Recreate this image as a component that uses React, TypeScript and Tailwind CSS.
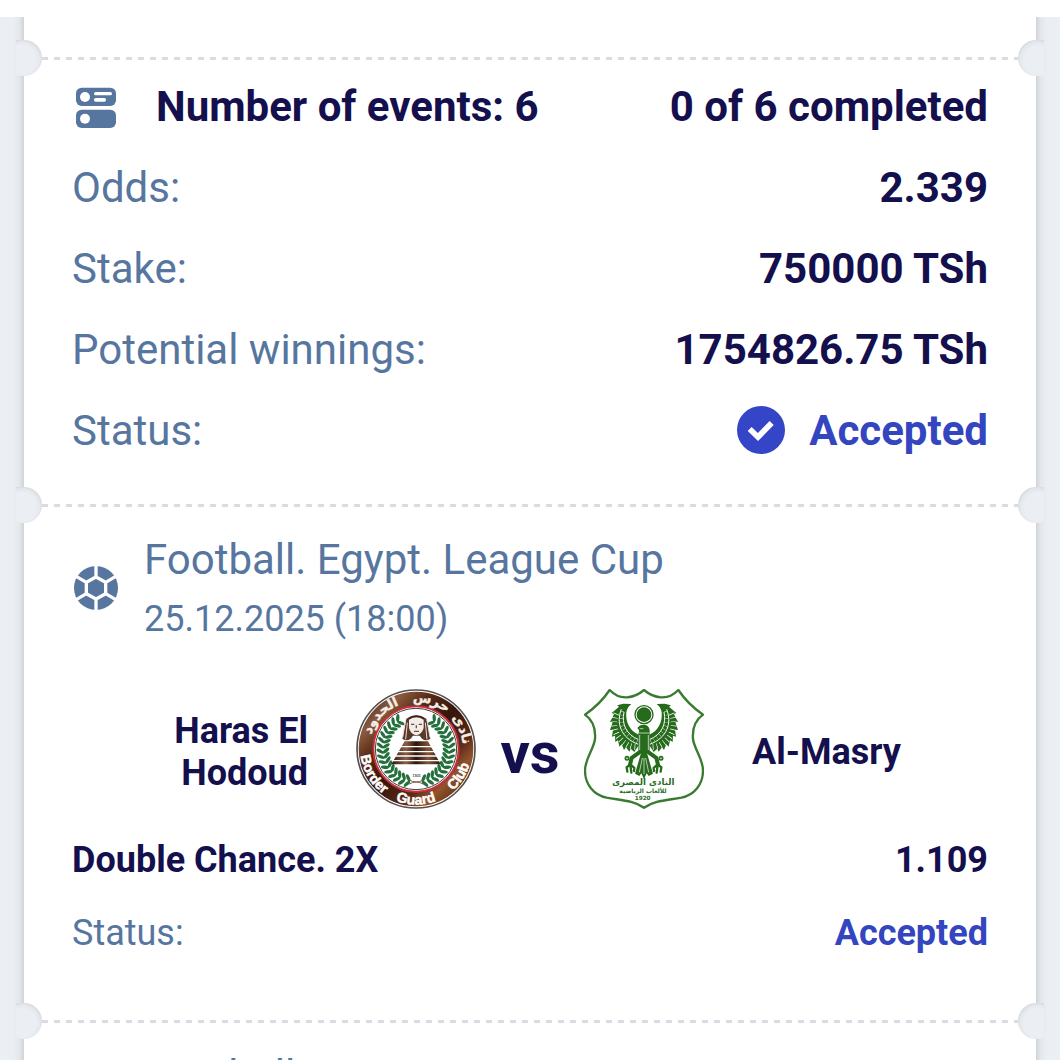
import React from 'react';

interface EventHeaderProps {
  league: string;
  date: string;
}

interface SummaryRowProps {
  label: string;
  children: React.ReactNode;
}

const EventsIcon = () => (
  <svg viewBox="36 25 144 144" className="w-12 h-12 shrink-0" aria-hidden="true">
    <rect x="48" y="39" width="120" height="55" rx="17" fill="#57769f" />
    <rect x="48" y="105" width="120" height="55" rx="17" fill="#57769f" />
    <circle cx="75" cy="67" r="15" fill="#fff" />
    <circle cx="75" cy="132" r="15" fill="#fff" />
    <rect x="102" y="52" width="54" height="10" rx="5" fill="#fff" />
    <rect x="102" y="70" width="36" height="11" rx="5" fill="#fff" />
  </svg>
);

const BallIcon = () => (
  <svg viewBox="66 72 144 144" className="w-12 h-12 shrink-0" aria-hidden="true">
    <circle cx="138" cy="144" r="66" fill="#57769f" />
    <path
      d="M138 111L167 127V161L138 177L109 161V127ZM138 111V74M167 127L201 107M167 161L201 181M138 177V214M109 161L75 181M109 127L75 107"
      fill="none"
      stroke="#fff"
      strokeWidth="10"
    />
  </svg>
);

const CheckIcon = () => (
  <svg viewBox="48 45 144 144" className="w-12 h-12 shrink-0" aria-hidden="true">
    <circle cx="120" cy="117" r="72" fill="#3445c8" />
    <path d="M86 114L111 138L152 96" fill="none" stroke="#fff" strokeWidth="17" />
  </svg>
);

const leafAngles = [-58, -49, -40, -31, -22, -13, -4, 5, 14, 23, 32, 41, 50, 59, 68, 77];

const HarasLogo = () => (
  <svg viewBox="48 57 360 360" className="w-[120px] h-[120px] shrink-0" role="img" aria-label="Haras El Hodoud">
    <defs>
      <linearGradient id="bronze" x1="0" y1="0" x2="1" y2="1">
        <stop offset="0" stopColor="#2e1308" />
        <stop offset=".2" stopColor="#8a5a3e" />
        <stop offset=".32" stopColor="#5a2b17" />
        <stop offset=".5" stopColor="#35150b" />
        <stop offset=".68" stopColor="#5a2b17" />
        <stop offset=".78" stopColor="#94532b" />
        <stop offset="1" stopColor="#240c05" />
      </linearGradient>
      <linearGradient id="stone" x1="0" x2="1">
        <stop offset="0" stopColor="#2c150c" />
        <stop offset=".3" stopColor="#8c6045" />
        <stop offset=".5" stopColor="#2c150c" />
        <stop offset=".75" stopColor="#80543a" />
        <stop offset="1" stopColor="#2c150c" />
      </linearGradient>
      <path id="ringTop" d="M87 237A141 141 0 0 1 369 237" />
      <path id="ringBottom" d="M61 237A167 167 0 0 0 395 237" />
    </defs>
    <circle cx="228" cy="237" r="177" fill="#fff" stroke="#55504e" strokeWidth="5" />
    <circle cx="228" cy="237" r="172" fill="url(#bronze)" />
    <circle cx="228" cy="237" r="128" fill="#fff" stroke="#c4303b" strokeWidth="6" />
    <circle cx="228" cy="237" r="122" fill="none" stroke="#473c38" strokeWidth="3" />

    {leafAngles.map((angle) => (
      <g key={angle} fill="#23703c">
        <g transform={`rotate(${angle} 228 237)`}>
          <ellipse cx="336" cy="234" rx="12" ry="5" transform="rotate(-35 336 234)" />
          <ellipse cx="318" cy="234" rx="12" ry="5" transform="rotate(35 318 234)" />
        </g>
        <g transform={`rotate(${-angle} 228 237)`}>
          <ellipse cx="120" cy="234" rx="12" ry="5" transform="rotate(35 120 234)" />
          <ellipse cx="138" cy="234" rx="12" ry="5" transform="rotate(-35 138 234)" />
        </g>
      </g>
    ))}

    <path d="M199 146Q229 124 259 146L271 206Q258 216 246 206L239 197H219L212 206Q200 216 187 206Z" fill="#5b392a" />
    <path d="M197 150L188 202M202 158L197 208M261 150L270 202M256 158L261 208" stroke="#e8ddd5" strokeWidth="3" />
    <path d="M207 149Q229 135 251 149V174Q245 194 229 196Q213 194 207 174Z" fill="#f3ece8" />
    <path d="M206 146Q229 132 252 146" fill="none" stroke="#3a2318" strokeWidth="4" />
    <path d="M213 163H223M236 163H246M222 184H237M229 166V175" stroke="#6b5145" strokeWidth="4" />
    <path d="M194 214H264L302 283H154Z" fill="url(#stone)" />
    <path d="M180 230H280M175 245H285M163 258H295M155 272H305" stroke="#fff" strokeWidth="4" />
    <path d="M208 330Q228 342 250 330M208 342Q228 330 250 342" fill="none" stroke="#7a5b4a" strokeWidth="3" />
    <text x="230" y="321" textAnchor="middle" fill="#444" className="font-['Liberation_Sans'] text-[11px] font-bold">1931</text>

    <g
      fill="#fff"
      stroke="#fff"
      strokeWidth="1.5"
      textAnchor="middle"
      className="font-['Liberation_Sans_Narrow','Liberation_Sans',sans-serif] text-[42px] font-bold"
    >
      <text><textPath href="#ringBottom" startOffset="17%">Border</textPath></text>
      <text><textPath href="#ringBottom" startOffset="50%">Guard</textPath></text>
      <text><textPath href="#ringBottom" startOffset="82%">Club</textPath></text>
    </g>
    <g
      fill="#f5eee9"
      stroke="#f5eee9"
      strokeWidth="1"
      textAnchor="middle"
      className="font-['DejaVu_Sans',sans-serif] text-[40px]"
    >
      <text><textPath href="#ringTop" startOffset="24%">الحدود</textPath></text>
      <text><textPath href="#ringTop" startOffset="60%">حرس</textPath></text>
      <text><textPath href="#ringTop" startOffset="87%">نادى</textPath></text>
    </g>
  </svg>
);

const Wing = () => (
  <g fill="none">
    <path
      d="M187 102L163 101L144 106L150 110L128 129L135 133L123 156L131 157L123 180L132 179L129 200L138 197L139 216L147 211L151 230L158 223L165 240L171 232L181 245L185 236L196 246L209 226V194C184 184 169 158 172 127Q175 111 187 102Z"
      fill="#266b1b"
    />
    <path d="M157 118C141 158 154 203 208 223" stroke="#fff" strokeWidth="3" />
    <path d="M165 126C157 162 172 194 209 209" stroke="#fff" strokeWidth="3" />
    <path d="M142 131C128 164 136 202 176 225Q188 231 204 231" stroke="#fff" strokeWidth="18" strokeDasharray="2 10" />
    <path d="M160 124C149 160 164 196 208 216" stroke="#fff" strokeWidth="10" strokeDasharray="1 10" />
  </g>
);

const Talon = () => (
  <g fill="none" stroke="#266b1b" strokeLinecap="round">
    <path d="M211 247L188 264L183 284" strokeWidth="12" />
    <path d="M184 283L173 292L175 305M184 285L187 308M184 283L196 294L195 303" strokeWidth="7" />
    <circle cx="174" cy="265" r="5" strokeWidth="5" />
  </g>
);

const MasryLogo = () => (
  <svg viewBox="45 57 360 360" className="w-[120px] h-[120px] shrink-0" role="img" aria-label="Al-Masry">
    <path
      d="M122 60Q145 84 174 82Q202 80 225 60Q248 80 276 82Q305 84 328 60Q357 103 402 134Q368 158 372 207C376 239 402 265 402 302C402 344 375 375 337 383C294 391 257 391 225 413C193 391 156 391 113 383C75 375 48 344 48 302C48 265 74 239 78 207Q82 158 48 134Q93 103 122 60Z"
      fill="#fff"
      stroke="#397b30"
      strokeWidth="7"
    />
    <Wing />
    <g transform="translate(450 0) scale(-1 1)">
      <Wing />
    </g>
    <Talon />
    <g transform="translate(450 0) scale(-1 1)">
      <Talon />
    </g>
    <circle cx="225" cy="134" r="27" fill="#fff" stroke="#266b1b" strokeWidth="4" />
    <circle cx="225" cy="134" r="22" fill="#266b1b" />
    <path d="M205 174Q212 163 226 164Q241 166 242 181V242L225 257L208 242V190Q214 183 205 174Z" fill="#266b1b" />
    <path d="M212 176H223M209 189H241M212 195V240M238 195V240" stroke="#fff" strokeWidth="2" />
    <path d="M217 246H233L252 311L239 318L233 310L225 328L217 310L211 318L198 311Z" fill="#266b1b" />
    <path d="M220 264L211 307M225 264V312M230 264L239 307" stroke="#fff" strokeWidth="2" />
    <g textAnchor="middle" fill="#266b1b" className="font-['DejaVu_Sans',sans-serif]">
      <text x="223" y="346" className="text-[26px] font-bold">النادى المصرى</text>
      <text x="222" y="369" className="text-[18px] font-bold">للألعاب الرياضية</text>
      <text x="221" y="390" className="text-[17px] font-bold">1920</text>
    </g>
  </svg>
);

// Perforated line between two parts of the ticket
const Perforation = () => (
  <div className="relative flex items-start -mx-2">
    <div className="w-[26px] h-9 shrink-0 rounded-r-full bg-[radial-gradient(circle_at_6px_20px,#ebeff4_14px,#e4e8ed_18px,#c9cdd2_23px)]" />
    <div className="grow h-[3px] mt-[17px] bg-[repeating-linear-gradient(to_right,#d9dde3_0_6px,transparent_6px_12px)]" />
    <div className="w-[26px] h-9 shrink-0 rounded-l-full bg-[radial-gradient(circle_at_20px_20px,#ebeff4_14px,#e4e8ed_18px,#c9cdd2_23px)]" />
  </div>
);

const SummaryRow: React.FC<SummaryRowProps> = ({ label, children }) => (
  <div className="flex items-center justify-between">
    <dt className="text-[#57769f]">{label}</dt>
    <dd className="font-bold">{children}</dd>
  </div>
);

const EventHeader: React.FC<EventHeaderProps> = ({ league, date }) => (
  <div className="flex items-center gap-6 text-[#57769f]">
    <BallIcon />
    <div className="flex flex-col gap-3.5">
      <h2 className="text-[42px] leading-[49px]">{league}</h2>
      <p className="text-4xl leading-[42px]">{date}</p>
    </div>
  </div>
);

const App: React.FC = () => {
  return (
    <div className="h-screen overflow-hidden flex flex-col bg-white font-[Roboto,sans-serif] text-[#140f4d]">
      <div className="h-[17px] shrink-0" />
      <div className="flex grow items-stretch">
        <div className="w-6 shrink-0 bg-[linear-gradient(to_right,#ebeff4_55%,#e4e8ed_80%,#d0d4d9)]" />

        <main className="relative grow min-w-0 bg-white">
          <div className="pt-[23px]">
            <Perforation />
          </div>

          <section className="px-12 pt-1.5 pb-8 text-[42px] leading-[49px]">
            <div className="flex items-end justify-between font-bold">
              <div className="flex items-end gap-9">
                <EventsIcon />
                <h1>Number of events: 6</h1>
              </div>
              <p>0 of 6 completed</p>
            </div>
            <dl className="flex flex-col gap-8 mt-8">
              <SummaryRow label="Odds:">2.339</SummaryRow>
              <SummaryRow label="Stake:">750000 TSh</SummaryRow>
              <SummaryRow label="Potential winnings:">1754826.75 TSh</SummaryRow>
              <SummaryRow label="Status:">
                <span className="flex items-start gap-6 text-[#3445c0]">
                  <CheckIcon />
                  Accepted
                </span>
              </SummaryRow>
            </dl>
          </section>

          <Perforation />

          <section className="px-12 pt-3 pb-[49px]">
            <EventHeader league="Football. Egypt. League Cup" date="25.12.2025 (18:00)" />

            <div className="flex items-center justify-center mt-[49px] text-4xl leading-[42px] font-bold">
              <p className="flex-1 pt-1.5 mr-12 text-right">Haras El Hodoud</p>
              <HarasLogo />
              <span className="w-[108px] pt-2 text-center text-[58px] leading-[64px]">vs</span>
              <MasryLogo />
              <p className="flex-1 pt-1.5 ml-12">Al-Masry</p>
            </div>

            <dl className="flex flex-col gap-[31px] mt-[30px] text-4xl leading-[42px]">
              <div className="flex items-center justify-between font-bold">
                <dt>Double Chance. 2X</dt>
                <dd>1.109</dd>
              </div>
              <div className="flex items-center justify-between">
                <dt className="text-[#57769f]">Status:</dt>
                <dd className="font-bold text-[#3445c0]">Accepted</dd>
              </div>
            </dl>
          </section>

          <Perforation />

          <section className="px-12 pt-3">
            <EventHeader league="Football. Egypt. League Cup" date="25.12.2025 (18:00)" />
          </section>
        </main>

        <div className="w-6 shrink-0 bg-[linear-gradient(to_left,#ebeff4_55%,#e4e8ed_80%,#d0d4d9)]" />
      </div>
    </div>
  );
};

export default App;
